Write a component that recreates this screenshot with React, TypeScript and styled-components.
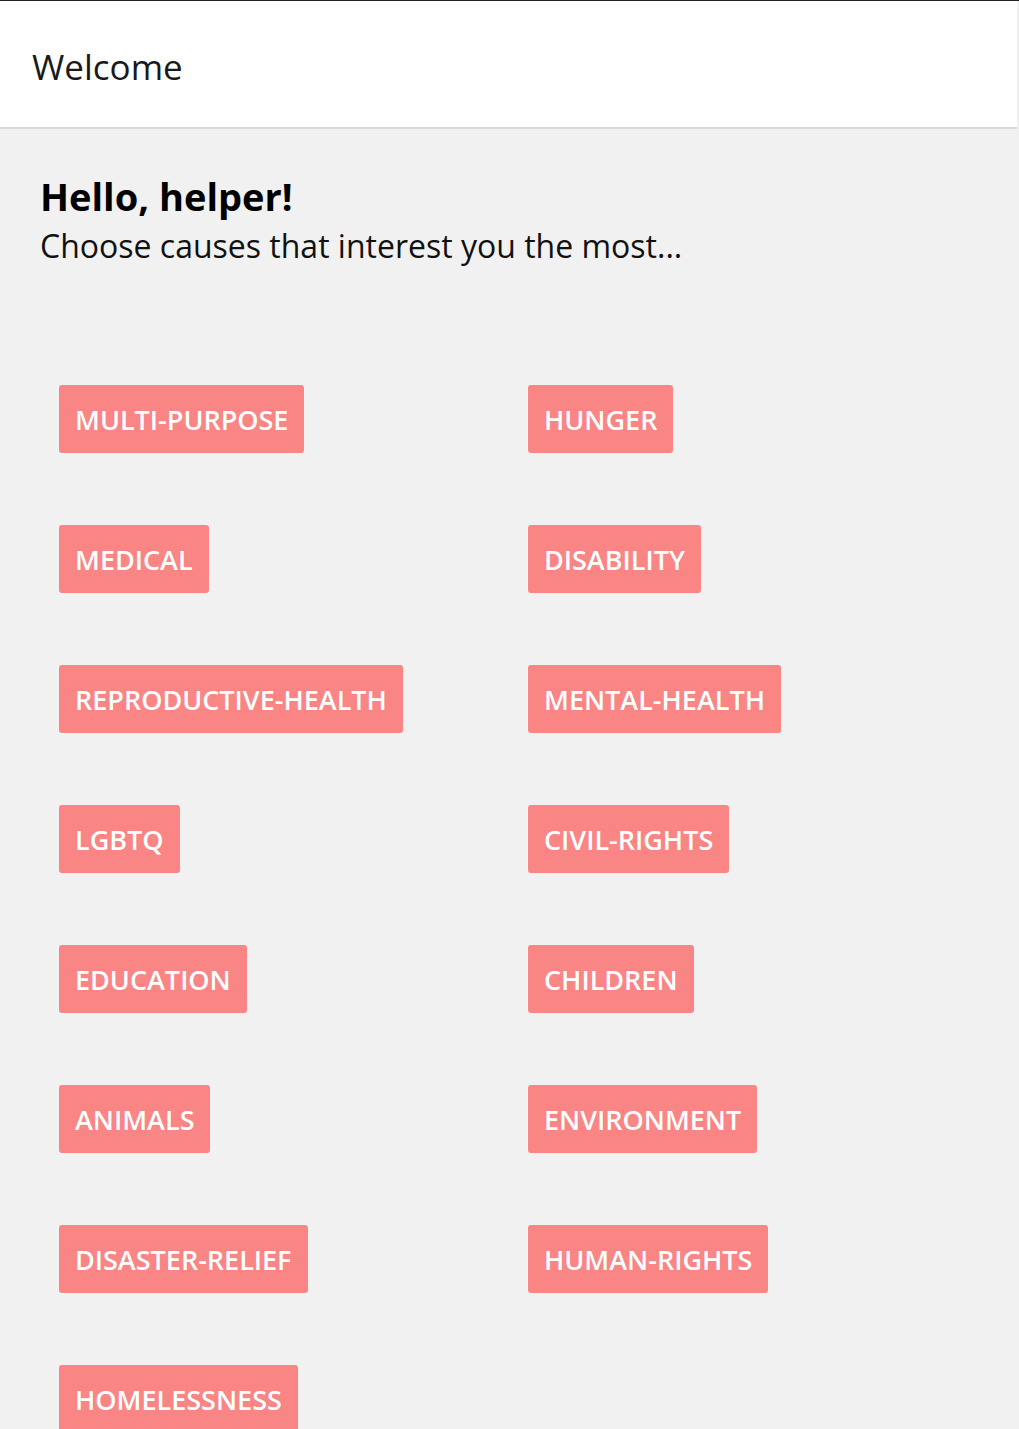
import React from "react";
import styled, { createGlobalStyle } from "styled-components";

const Global = createGlobalStyle`
  html, body {
    margin: 0;
    padding: 0;
    background: #f1f1f1;
    font-family: "Open Sans", "Noto Sans", sans-serif;
  }
`;

const Page = styled.div`
  border-top: 1px solid #222;
  min-height: 1428px;
  background: #f1f1f1;
  padding-right: 2px;
`;

const Header = styled.header`
  height: 126px;
  background: #fff;
  border-bottom: 2px solid #d8d8d8;
  display: flex;
  align-items: center;
  padding-left: 32px;
`;

const HeaderTitle = styled.h1`
  margin: 0;
  padding-top: 4px;
  font-size: 35px;
  font-weight: 400;
  color: #1a1a1a;
`;

const Content = styled.main`
  padding: 42px 40px 0 40px;
`;

const Greeting = styled.h2`
  margin: 0;
  font-size: 38px;
  font-weight: 700;
  color: #000;
  line-height: 50px;
`;

const Subtitle = styled.p`
  margin: 0;
  font-size: 32px;
  font-weight: 400;
  color: #111;
  line-height: 50px;
`;

const CauseGrid = styled.div`
  display: grid;
  grid-template-columns: 469px 1fr;
  row-gap: 72px;
  padding: 114px 0 0 19px;
`;

const CauseButton = styled.button`
  justify-self: start;
  height: 68px;
  padding: 0 16px;
  border: none;
  border-radius: 3px;
  background: #fa8585;
  color: #fff;
  font-family: "Open Sans", "Noto Sans", sans-serif;
  font-size: 27px;
  font-weight: 600;
  cursor: pointer;
`;

const causes = [
  "MULTI-PURPOSE",
  "HUNGER",
  "MEDICAL",
  "DISABILITY",
  "REPRODUCTIVE-HEALTH",
  "MENTAL-HEALTH",
  "LGBTQ",
  "CIVIL-RIGHTS",
  "EDUCATION",
  "CHILDREN",
  "ANIMALS",
  "ENVIRONMENT",
  "DISASTER-RELIEF",
  "HUMAN-RIGHTS",
  "HOMELESSNESS",
];

export default function App() {
  return (
    <>
      <Global />
      <Page>
        <Header>
          <HeaderTitle>Welcome</HeaderTitle>
        </Header>
        <Content>
          <Greeting>Hello, helper!</Greeting>
          <Subtitle>Choose causes that interest you the most...</Subtitle>
          <CauseGrid>
            {causes.map((c) => (
              <CauseButton key={c}>{c}</CauseButton>
            ))}
          </CauseGrid>
        </Content>
      </Page>
    </>
  );
}
